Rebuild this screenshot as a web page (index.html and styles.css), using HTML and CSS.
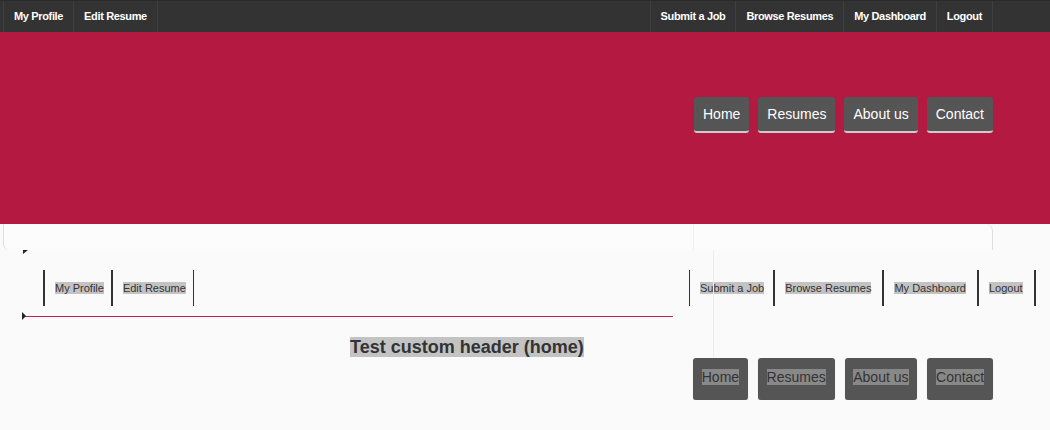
FILE: index.html
```html
<!DOCTYPE html>
<html lang="en">
<head>
    <meta charset="UTF-8">
    <meta name="viewport" content="width=device-width, initial-scale=1.0">
    <title>Resumes</title>
    <link rel="stylesheet" href="styles.css">
</head>
<body>
    <header class="topbar">
        <ul class="topnav">
            <li><a href="#">My Profile</a></li>
            <li><a href="#">Edit Resume</a></li>
        </ul>
        <ul class="topnav">
            <li><a href="#">Submit a Job</a></li>
            <li><a href="#">Browse Resumes</a></li>
            <li><a href="#">My Dashboard</a></li>
            <li><a href="#">Logout</a></li>
        </ul>
    </header>

    <div class="banner">
        <nav class="mainnav">
            <a href="#">Home</a>
            <a href="#">Resumes</a>
            <a href="#">About us</a>
            <a href="#">Contact</a>
        </nav>
    </div>

    <div class="strip"><span class="strip-line"></span></div>

    <div class="content">
        <div class="main-col">
            <span class="corner"></span>
            <ul class="subnav subnav-left">
                <li><a href="#"><span>My Profile</span></a></li>
                <li><a href="#"><span>Edit Resume</span></a></li>
            </ul>
            <div class="rule"></div>
            <h1><span>Test custom header (home)</span></h1>
        </div>

        <div class="side-col">
            <ul class="subnav subnav-right">
                <li><a href="#"><span>Submit a Job</span></a></li>
                <li><a href="#"><span>Browse Resumes</span></a></li>
                <li><a href="#"><span>My Dashboard</span></a></li>
                <li><a href="#"><span>Logout</span></a></li>
            </ul>
            <nav class="mainnav mainnav-plain">
                <a href="#"><span>Home</span></a>
                <a href="#"><span>Resumes</span></a>
                <a href="#"><span>About us</span></a>
                <a href="#"><span>Contact</span></a>
            </nav>
        </div>
    </div>
</body>
</html>
```

FILE: styles.css
```css
body {
    margin: 0;
    font-family: "Liberation Sans", Arial, sans-serif;
    background-color: #fafafa;
    color: #333;
    overflow: hidden;
}
ul {
    list-style: none;
    margin: 0;
    padding: 0;
}
a {
    text-decoration: none;
}

/* dark top bar */
.topbar {
    display: flex;
    justify-content: space-between;
    height: 32px;
    padding: 0 57px 0 3px;
    background-color: #333;
    border-top: 1px solid #2a2a2a;
    box-sizing: border-box;
}
.topnav {
    display: flex;
}
.topnav li {
    border-left: 1px solid #3f3f3f;
}
.topnav li:last-child {
    border-right: 1px solid #3f3f3f;
}
.topnav a {
    display: block;
    padding: 0 10px;
    line-height: 31px;
    font-size: 11px;
    font-weight: bold;
    letter-spacing: -0.35px;
    color: #fff;
}

/* red banner */
.banner {
    display: flex;
    justify-content: flex-end;
    height: 192px;
    padding: 65px 57px 0 0;
    box-sizing: border-box;
    background-color: #b41a41;
}
.mainnav {
    display: flex;
    gap: 9px;
    align-items: flex-start;
}
.mainnav a {
    display: block;
    padding: 0 9px;
    line-height: 34px;
    font-size: 14px;
    color: #fff;
    background-color: #555;
    border-radius: 3px;
    border-bottom: 2px solid #ccc;
}

.strip {
    position: relative;
    height: 26px;
    margin-left: 3px;
    width: 990px;
    box-sizing: border-box;
    background-color: #fcfcfc;
    border-left: 1px solid #dedede;
    border-right: 1px solid #dedede;
    border-radius: 0 7px 0 6px;
}
.strip-line {
    position: absolute;
    left: 689px;
    top: 0;
    bottom: 0;
    border-left: 1px solid #f0f0f0;
}

/* broken copy of the menus */
.content {
    display: flex;
}
.main-col {
    width: 651px;
    margin-left: 22px;
}
.corner {
    display: block;
    width: 0;
    height: 0;
    margin-left: 1px;
    border-top: 4px solid #222;
    border-right: 5px solid transparent;
}
.subnav {
    display: flex;
    height: 36px;
    font-size: 11px;
}
.subnav li {
    height: 36px;
    display: flex;
    align-items: center;
}
.subnav a {
    color: #333;
    padding: 0 10px;
}
.subnav span {
    background-color: #c3c3c3;
}
.subnav-left {
    margin: 16px 0 0 21px;
}
.subnav-left a {
    padding-right: 7px;
}
.subnav-left li {
    border-left: 2px solid #333;
}
.subnav-left li:last-child {
    border-right: 1px solid #333;
}
.subnav-right {
    margin-top: 20px;
}
.subnav-right a {
    padding-right: 9px;
}
.subnav-right li + li a {
    padding-right: 11px;
}
.subnav-right li {
    border-right: 2px solid #333;
}
.subnav-right li:first-child {
    border-left: 1px solid #333;
}
.rule {
    position: relative;
    height: 1px;
    margin-top: 10px;
    background-color: #c0244e;
}
.rule::before {
    content: "";
    position: absolute;
    left: 0;
    top: -4px;
    border-left: 4px solid #222;
    border-top: 4px solid transparent;
    border-bottom: 4px solid transparent;
}
h1 {
    margin: 0;
    padding: 20px 0 0 328px;
    font-size: 18px;
    line-height: 21px;
}
h1 span {
    background-color: #c3c3c3;
}

.side-col {
    position: relative;
    margin-left: 16px;
}
.side-col::before {
    content: "";
    position: absolute;
    left: 24px;
    top: 0;
    height: 200px;
    border-left: 1px solid #ececec;
}
.mainnav-plain {
    position: relative;
    gap: 10px;
    margin: 52px 0 0 4px;
}
.mainnav-plain a {
    padding: 0 8.75px 4px;
    line-height: 38px;
    color: #333;
    border-bottom: 0;
    box-shadow: 0 1px 1px rgba(0, 0, 0, 0.2);
}
.mainnav-plain span {
    background-color: #888;
}
```
